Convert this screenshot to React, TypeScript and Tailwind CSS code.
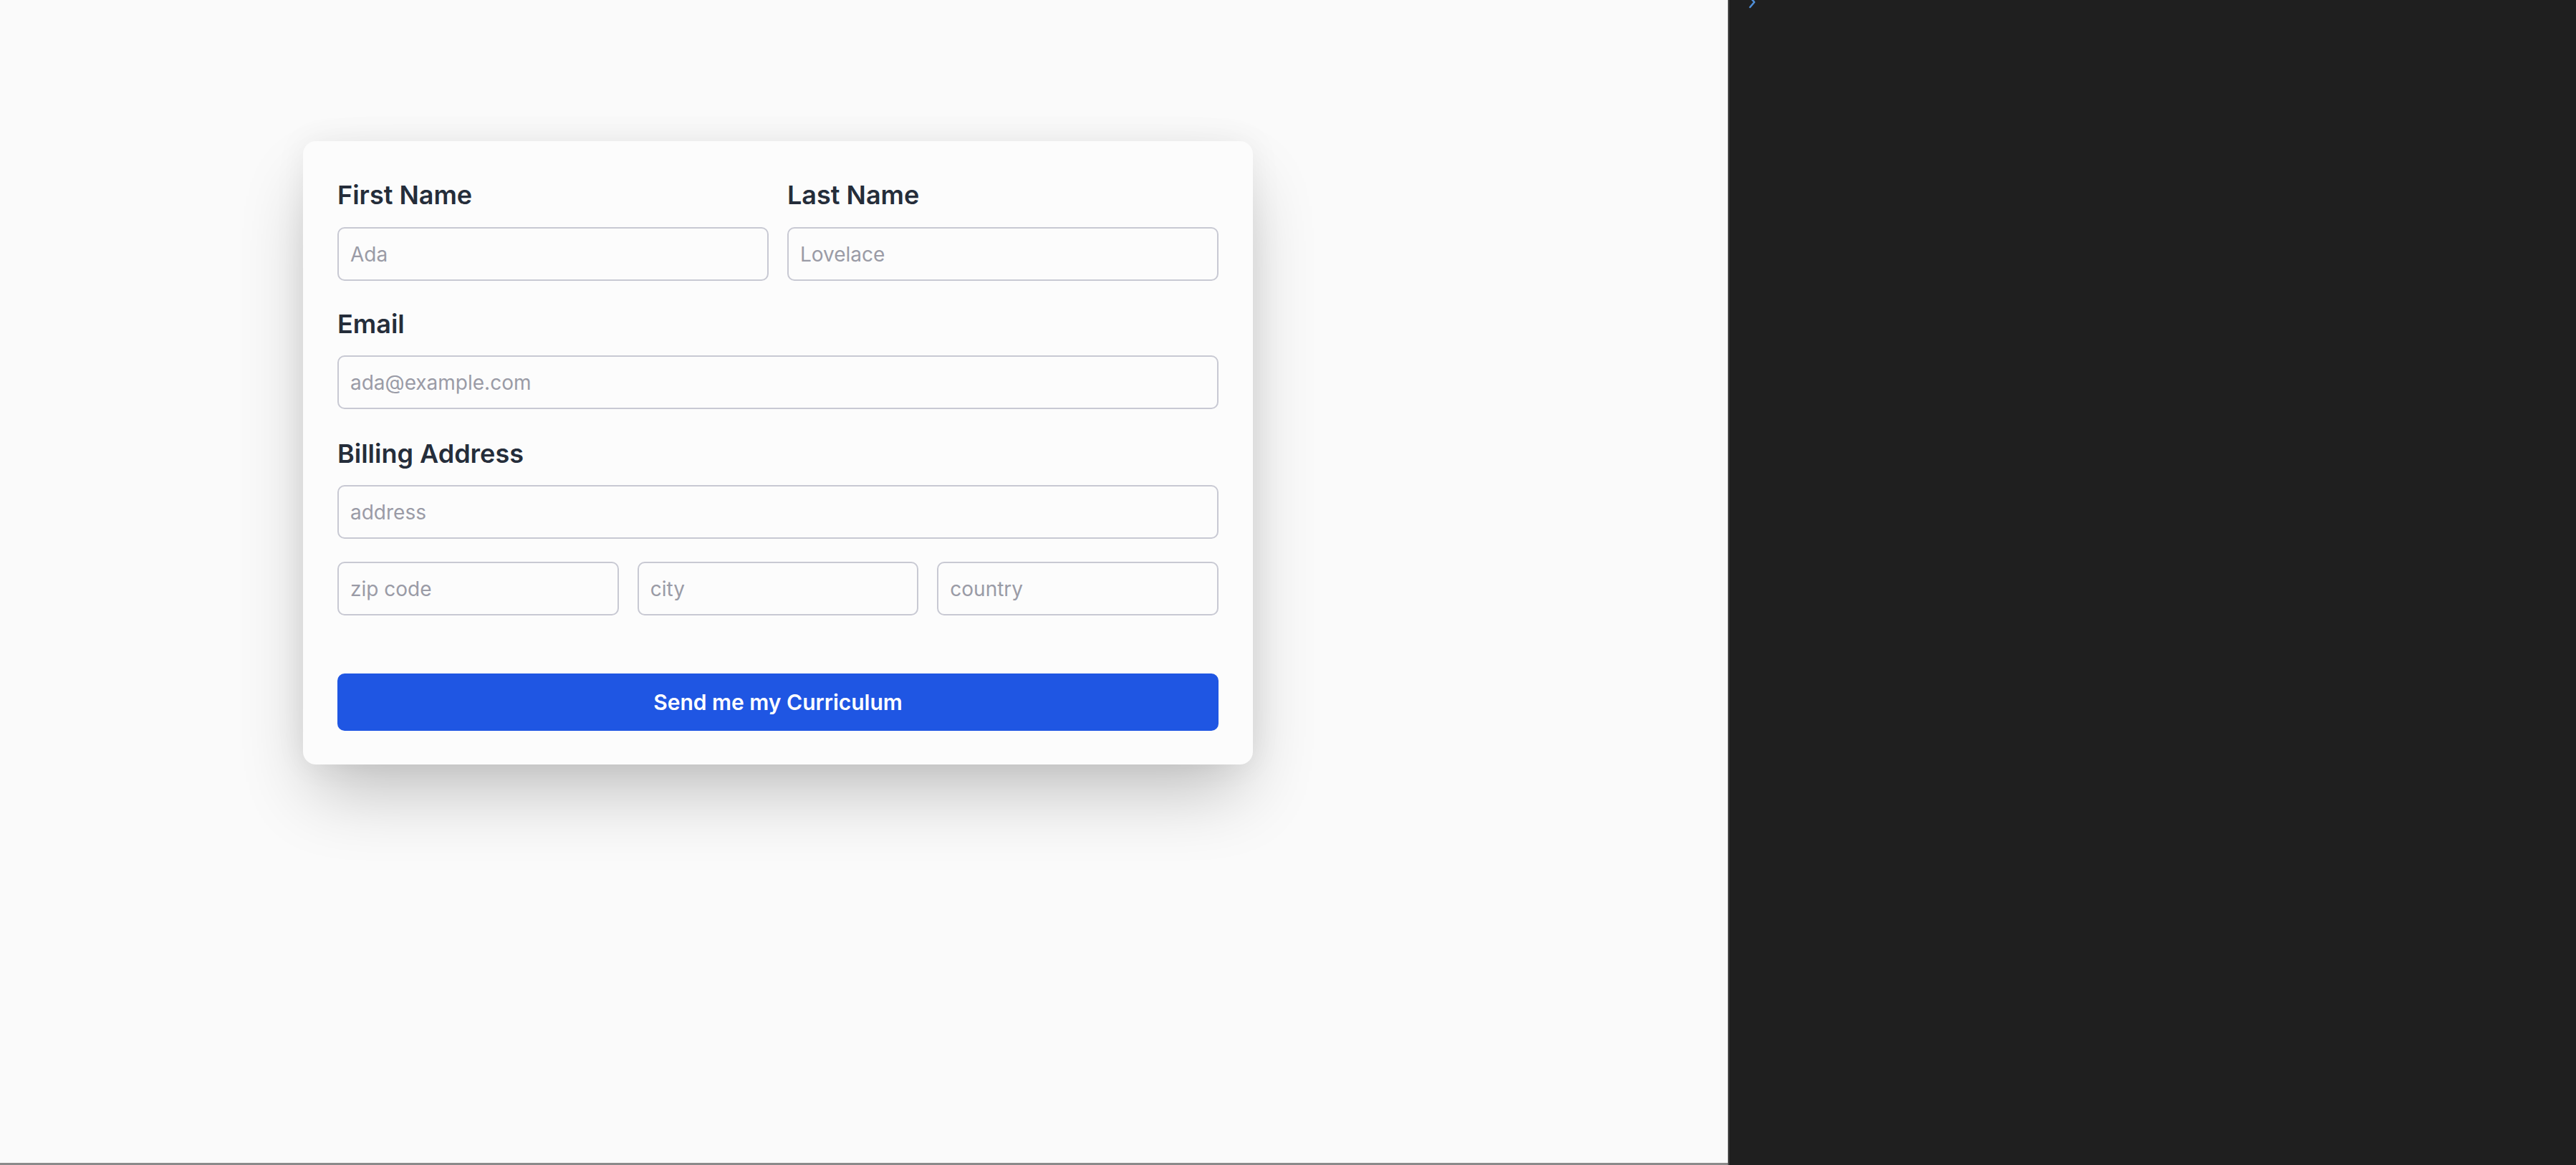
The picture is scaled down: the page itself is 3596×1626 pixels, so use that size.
import React from "react";

function Field({ placeholder, className = "" }: { placeholder: string; className?: string }) {
  return (
    <input
      type="text"
      placeholder={placeholder}
      className={
        "h-[75px] w-full rounded-[10px] border-2 border-[#c8c9d3] bg-transparent px-[16px] text-[28px] text-[#1f2937] placeholder:text-[#9a9ba6] outline-none " +
        className
      }
      style={{ fontFamily: "Inter, 'Liberation Sans', sans-serif" }}
    />
  );
}

function Label({ children }: { children: React.ReactNode }) {
  return (
    <label className="block text-[36px] font-semibold leading-[51px] text-[#252d3a]">{children}</label>
  );
}

export default function App() {
  return (
    <div
      className="flex h-[1626px] w-[3596px] overflow-hidden"
      style={{ fontFamily: "Inter, 'Liberation Sans', sans-serif" }}
    >
      <div className="h-full w-[2412px] shrink-0 border-b-[3px] border-[#8a8a8a] bg-[#fafafa] pl-[423px] pt-[197px]">
        <form
          className="w-[1326px] rounded-[18px] bg-[#fcfcfc] px-[48px] pb-[47px] pt-[50px] shadow-[0_50px_100px_-15px_rgba(0,0,0,0.24),0_0_45px_rgba(0,0,0,0.06)]"
          onSubmit={(e) => e.preventDefault()}
        >
          <div className="grid grid-cols-2 gap-x-[26px]">
            <div>
              <Label>First Name</Label>
              <div className="mt-[19px]">
                <Field placeholder="Ada" />
              </div>
            </div>
            <div>
              <Label>Last Name</Label>
              <div className="mt-[19px]">
                <Field placeholder="Lovelace" />
              </div>
            </div>
          </div>

          <div className="mt-[35px]">
            <Label>Email</Label>
            <div className="mt-[18px]">
              <Field placeholder="ada@example.com" />
            </div>
          </div>

          <div className="mt-[37px]">
            <Label>Billing Address</Label>
            <div className="mt-[18px]">
              <Field placeholder="address" />
            </div>
            <div className="mt-[32px] grid grid-cols-3 gap-x-[26px]">
              <Field placeholder="zip code" />
              <Field placeholder="city" />
              <Field placeholder="country" />
            </div>
          </div>

          <button
            type="submit"
            className="mt-[81px] flex h-[80px] w-full items-center justify-center rounded-[10px] bg-[#1f56e3] text-[30px] font-semibold text-white"
          >
            Send me my Curriculum
          </button>
        </form>
      </div>
      <div className="relative h-full flex-1 border-l-[2px] border-[#4a4a4a] bg-[#1f1f1f]">
        <svg
          className="absolute left-[26px] top-[-6px]"
          width="12"
          height="18"
          viewBox="0 0 12 18"
          fill="none"
        >
          <path d="M3 2 L9 9 L3 16" stroke="#4f8fd8" strokeWidth="2.5" strokeLinecap="round" strokeLinejoin="round" />
        </svg>
      </div>
    </div>
  );
}
